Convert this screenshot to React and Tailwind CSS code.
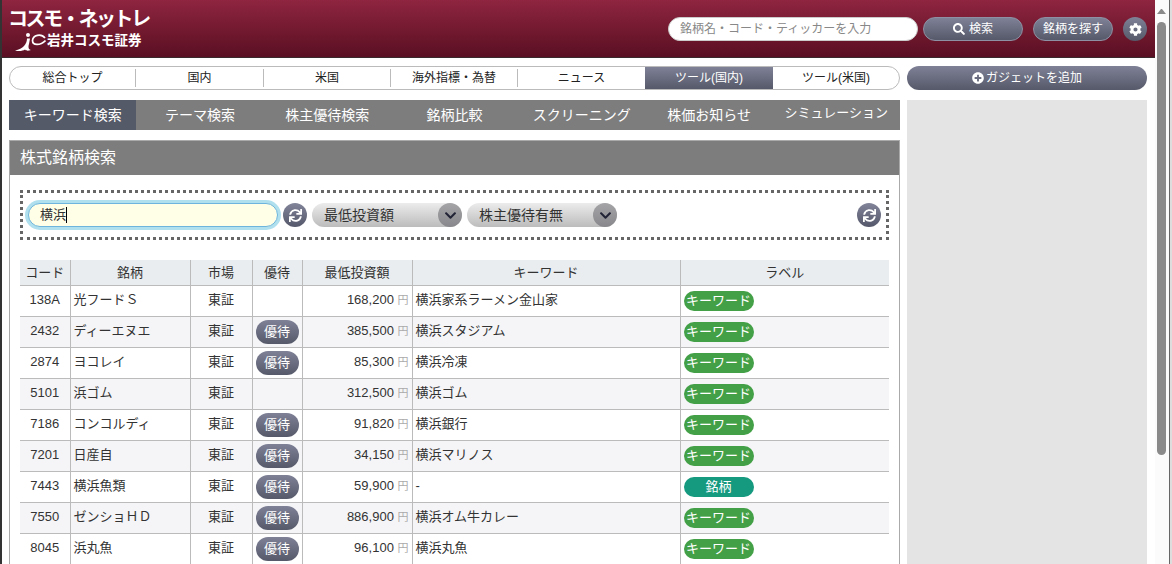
import { FaSearch, FaCog, FaPlusCircle, FaSync, FaChevronDown } from 'react-icons/fa';

const FONT = { fontFamily: '"Liberation Sans", "Noto Sans CJK JP", sans-serif' };

const NAV = [
  { label: '総合トップ', w: 'w-[126px] border-r border-[#bbb]' },
  { label: '国内', w: 'w-[128px] border-r border-[#bbb]' },
  { label: '米国', w: 'w-[127px] border-r border-[#bbb]' },
  { label: '海外指標・為替', w: 'w-[127px] border-r border-[#bbb]' },
  { label: 'ニュース', w: 'w-[127px]' },
];
const TABS = ['キーワード検索', 'テーマ検索', '株主優待検索', '銘柄比較', 'スクリーニング', '株価お知らせ', 'シミュレーション'];

const ROWS = [
  { code: '138A', name: '光フードＳ', perk: false, price: '168,200', kw: '横浜家系ラーメン金山家', label: 'キーワード' },
  { code: '2432', name: 'ディーエヌエ', perk: true, price: '385,500', kw: '横浜スタジアム', label: 'キーワード' },
  { code: '2874', name: 'ヨコレイ', perk: true, price: '85,300', kw: '横浜冷凍', label: 'キーワード' },
  { code: '5101', name: '浜ゴム', perk: false, price: '312,500', kw: '横浜ゴム', label: 'キーワード' },
  { code: '7186', name: 'コンコルディ', perk: true, price: '91,820', kw: '横浜銀行', label: 'キーワード' },
  { code: '7201', name: '日産自', perk: true, price: '34,150', kw: '横浜マリノス', label: 'キーワード' },
  { code: '7443', name: '横浜魚類', perk: true, price: '59,900', kw: '-', label: '銘柄' },
  { code: '7550', name: 'ゼンショＨＤ', perk: true, price: '886,900', kw: '横浜オム牛カレー', label: 'キーワード' },
  { code: '8045', name: '浜丸魚', perk: true, price: '96,100', kw: '横浜丸魚', label: 'キーワード' },
];

function RefreshButton() {
  return (
    <button className="flex h-6 w-6 shrink-0 items-center justify-center rounded-full bg-gradient-to-b from-[#82859a] to-[#55586a] text-[13px] text-white">
      <FaSync />
    </button>
  );
}

function SelectPill({ label }) {
  return (
    <div className="flex h-6 w-[150px] shrink-0 items-center justify-between rounded-full bg-gradient-to-b from-[#ececec] to-[#bcbcbc] pl-3 text-sm text-[#333]">
      <span>{label}</span>
      <span className="flex h-6 w-6 items-center justify-center rounded-full bg-gradient-to-b from-[#a5a5a8] to-[#88888c] text-[13px] text-[#222436]">
        <FaChevronDown />
      </span>
    </div>
  );
}

function Logo() {
  return (
    <div className="flex w-[200px] shrink-0 flex-col pl-[6px] pt-2 text-white">
      <div className="text-[20px] font-bold leading-[22px] tracking-[-2.4px]">コスモ・ネットレ</div>
      <div className="flex items-center pl-[6px]">
        <svg width="32" height="22" viewBox="0 0 32 22" fill="none" stroke="white">
          <circle cx="14" cy="5" r="2" fill="white" stroke="none" />
          <path d="M13 8.5 C13 14 9 19 1 20.5 C5 21.5 9 21 11 19.5 C12 21 14 21 17 20 C14.5 19.5 14 17 15 14 L16 8.5 Z" fill="white" stroke="none" />
          <path d="M31 8 C27 3 19 5 18.5 10.5 C18.5 15.5 26 16 31.5 10.5" strokeWidth="1.7" />
        </svg>
        <span className="ml-px text-[13.5px] font-bold leading-none">岩井コスモ証券</span>
      </div>
    </div>
  );
}

function Header() {
  return (
    <header className="flex h-[58px] items-start border-b border-[#3a2a2e] bg-gradient-to-b from-[#8f2540] to-[#5a0f22] pr-2">
      <Logo />
      <div className="ml-auto flex items-center pt-[17px]">
        <input
          readOnly
          placeholder="銘柄名・コード・ティッカーを入力"
          className="h-6 w-[250px] rounded-full border border-[#ccc] bg-white px-[11px] text-xs placeholder:text-[#888] outline-none"
        />
        <button className="ml-[5px] flex h-6 w-[100px] items-center justify-center gap-1 rounded-full border border-[#8e91a3] bg-gradient-to-b from-[#7f8297] to-[#565969] text-xs text-white">
          <FaSearch className="text-[12px]" />
          検索
        </button>
        <button className="ml-[10px] h-6 w-20 rounded-full border border-[#8e91a3] bg-gradient-to-b from-[#7f8297] to-[#565969] text-xs text-white">
          銘柄を探す
        </button>
        <button className="ml-[10px] flex h-6 w-6 items-center justify-center rounded-full bg-gradient-to-b from-[#7f8297] to-[#565969] text-[13px] text-white">
          <FaCog />
        </button>
      </div>
    </header>
  );
}

function NavBar() {
  return (
    <div className="flex h-6 w-[891px] items-center overflow-hidden rounded-full border border-[#bbb] text-xs text-[#222]">
      {NAV.map(item => (
        <div key={item.label} className={`flex h-[18px] items-center justify-center ${item.w}`}>
          {item.label}
        </div>
      ))}
      <div className="flex h-full w-[128px] items-center justify-center bg-gradient-to-b from-[#7f8297] to-[#565969] text-white">
        ツール(国内)
      </div>
      <div className="flex h-[18px] flex-1 items-center justify-center">ツール(米国)</div>
    </div>
  );
}

function ResultTable() {
  return (
    <table className="mt-5 w-[869px] table-fixed border-collapse text-[13px] text-[#333]">
      <colgroup>
        <col className="w-[50px]" />
        <col className="w-[120px]" />
        <col className="w-[62px]" />
        <col className="w-[50px]" />
        <col className="w-[110px]" />
        <col className="w-[268px]" />
        <col className="w-[209px]" />
      </colgroup>
      <thead>
        <tr className="h-[25px] border-b border-[#bbb] bg-[#e9edef]">
          {['コード', '銘柄', '市場', '優待', '最低投資額', 'キーワード', 'ラベル'].map((h, i) => (
            <th key={h} className={`text-center font-normal ${i < 6 ? 'border-r border-[#bbb]' : ''}`}>{h}</th>
          ))}
        </tr>
      </thead>
      <tbody>
        {ROWS.map((r, i) => (
          <tr key={r.code} className={`h-[31px] border-b border-[#bbb] ${i % 2 ? 'bg-[#f5f5f7]' : 'bg-white'}`}>
            <td className="border-r border-[#bbb] pb-[2px] text-center">{r.code}</td>
            <td className="border-r border-[#bbb] pb-[2px] pl-[3px]">{r.name}</td>
            <td className="border-r border-[#bbb] pb-[2px] text-center">東証</td>
            <td className="border-r border-[#bbb] px-[3px]">
              {r.perk && (
                <div className="flex h-6 w-[43px] items-center justify-center rounded-full bg-gradient-to-b from-[#7f8297] to-[#565969] text-white">
                  優待
                </div>
              )}
            </td>
            <td className="border-r border-[#bbb] pb-[2px] pr-[3px] text-right">
              {r.price} <span className="text-[11px] text-[#aaa]">円</span>
            </td>
            <td className="border-r border-[#bbb] pb-[2px] pl-[3px]">{r.kw}</td>
            <td className="pl-[3px]">
              <div className={`flex h-5 w-[70px] items-center justify-center rounded-full text-white ${r.label === '銘柄' ? 'bg-[#15997f]' : 'bg-[#43a047]'}`}>
                {r.label}
              </div>
            </td>
          </tr>
        ))}
      </tbody>
    </table>
  );
}

export default function App() {
  return (
    <div className="flex h-[564px] w-[1172px] overflow-hidden bg-white" style={FONT}>
      <div className="w-[2px] shrink-0 bg-[#333]" />

      <main className="w-[1153px] shrink-0">
        <Header />
        <div className="flex gap-[7px] pl-[7px] pt-2">
          <div className="flex w-[891px] shrink-0 flex-col">
            <NavBar />
            <div className="mt-[10px] flex h-[30px] bg-[#7d7d7d] text-sm text-white">
              {TABS.map((t, i) => (
                <div
                  key={t}
                  className={`flex flex-1 items-center justify-center ${i === 0 ? 'bg-[#555a68]' : ''} ${i === 6 ? 'pb-1 text-[13px]' : ''}`}
                >
                  {t}
                </div>
              ))}
            </div>
            <section className="mt-[10px] border border-[#aaa]">
              <h2 className="flex h-[34px] items-center bg-[#7d7d7d] pl-[10px] text-base font-normal text-white">株式銘柄検索</h2>
              <div className="px-[10px] pt-[15px]">
                <div className="flex h-[50px] items-center gap-[5px] border-[3px] border-dotted border-[#666] pl-[5px] pr-1">
                  <div className="flex h-6 w-[250px] shrink-0 items-center rounded-full border border-[#6db5dd] bg-[#ffffe8] pl-[11px] text-[13px] text-[#333] shadow-[0_0_0_3px_#b0e0ee]">
                    横浜<span className="h-4 w-px bg-black" />
                  </div>
                  <RefreshButton />
                  <SelectPill label="最低投資額" />
                  <SelectPill label="株主優待有無" />
                  <div className="ml-auto mr-px">
                    <RefreshButton />
                  </div>
                </div>
                <ResultTable />
              </div>
            </section>
          </div>

          <aside className="w-[240px] shrink-0">
            <button className="flex h-6 w-full items-center justify-center gap-0.5 rounded-full bg-gradient-to-b from-[#7f8297] to-[#565969] text-xs text-white">
              <FaPlusCircle className="text-[12px]" />
              ガジェットを追加
            </button>
            <div className="mt-[10px] h-[470px] bg-[#e4e4e4]" />
          </aside>
        </div>
      </main>

      <div className="flex w-[14px] shrink-0 flex-col bg-[#fbfbfb] pl-[2px]">
        <div className="mt-[9px] h-0 w-[9px] border-x-[4.5px] border-b-[5px] border-x-transparent border-b-[#8a8a8a]" />
        <div className="mt-[8px] h-[433px] w-[9px] rounded-full bg-[#8a8a8a]" />
      </div>
      <div className="w-px shrink-0 bg-[#666]" />
      <div className="w-[2px] shrink-0 bg-[#ddd]" />
    </div>
  );
}
